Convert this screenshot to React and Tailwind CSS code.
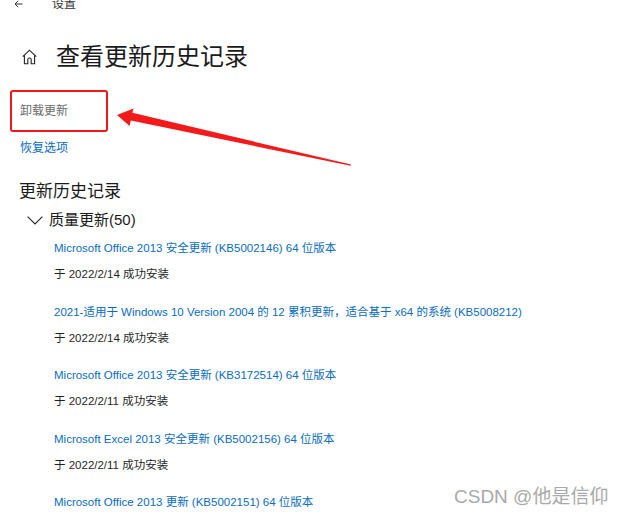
import React from 'react';

const font = '"Liberation Sans", "Noto Sans CJK SC", sans-serif';

const updates = [
  { title: 'Microsoft Office 2013 安全更新 (KB5002146) 64 位版本', date: '于 2022/2/14 成功安装' },
  { title: '2021-适用于 Windows 10 Version 2004 的 12 累积更新，适合基于 x64 的系统 (KB5008212)', date: '于 2022/2/14 成功安装' },
  { title: 'Microsoft Office 2013 安全更新 (KB3172514) 64 位版本', date: '于 2022/2/11 成功安装' },
  { title: 'Microsoft Excel 2013 安全更新 (KB5002156) 64 位版本', date: '于 2022/2/11 成功安装' },
  { title: 'Microsoft Office 2013 更新 (KB5002151) 64 位版本', date: '' },
];

function HomeIcon() {
  return (
    <svg width="15" height="16" viewBox="0 0 15 16" fill="none" stroke="#222" strokeWidth="1.1">
      <path d="M0.8 7.6 L7.5 1.2 L14.2 7.6" />
      <path d="M2.4 6.2 V14.8 H5.8 V10.4 Q5.8 9 7.5 9 Q9.2 9 9.2 10.4 V14.8 H12.6 V6.2" />
    </svg>
  );
}

export default function App() {
  return (
    <div
      className="relative w-[620px] h-[518px] overflow-hidden bg-white text-[#1f1f1f]"
      style={{ fontFamily: font }}
    >
      {/* top bar, cut by the screenshot */}
      <div className="-mt-[4px] h-[16px] flex items-center">
        <svg className="ml-[14px]" width="9" height="8" viewBox="0 0 9 8" fill="none" stroke="#333" strokeWidth="1">
          <path d="M8.5 4 H1 M4.2 0.8 L1 4 L4.2 7.2" />
        </svg>
        <span className="ml-[29px] text-[12px] leading-[16px] text-[#333]">设置</span>
      </div>

      {/* page title */}
      <div className="mt-[29px] h-[32px] flex items-center pl-[22px]">
        <HomeIcon />
        <h1 className="ml-[19px] text-[24px] leading-[32px] text-[#1a1a1a]">查看更新历史记录</h1>
      </div>

      <div className="mt-[30px] pl-[20px] text-[12px] leading-[16px] text-[#6b6b6b]">卸载更新</div>
      <div className="mt-[21px] pl-[20px] text-[12px] leading-[16px] text-[#0a6cc4]">恢复选项</div>

      <h2 className="mt-[24px] pl-[19px] text-[17px] leading-[24px] text-[#1a1a1a]">更新历史记录</h2>

      <div className="mt-[5px] h-[22px] flex items-center pl-[27px]">
        <svg width="16" height="9" viewBox="0 0 16 9" fill="none" stroke="#222" strokeWidth="1.1">
          <path d="M0.6 0.6 L8 8 L15.4 0.6" />
        </svg>
        <span className="ml-[6px] text-[15px] leading-[22px] text-[#1a1a1a]">质量更新(50)</span>
      </div>

      <div className="mt-[7px] pl-[54px] flex flex-col gap-[17.5px]">
        {updates.map((u, i) => (
          <div key={i}>
            <div className="text-[11.5px] leading-[20px] text-[#0a6cc4] whitespace-nowrap">{u.title}</div>
            {u.date && (
              <div className="mt-[6px] text-[11.5px] leading-[20px] text-[#1f1f1f]">{u.date}</div>
            )}
          </div>
        ))}
      </div>

      {/* annotation: red box + arrow */}
      <div className="absolute left-[10px] top-[90px] w-[98px] h-[42px] border-2 border-[#f01818] rounded-[3px]" />
      <svg className="absolute left-0 top-0" width="620" height="518" viewBox="0 0 620 518">
        <polygon
          points="117,115 133.5,108.5 132.3,112.8 351,164.6 350.6,165.8 130.8,120.6 129.6,126"
          fill="#f21a1a"
        />
      </svg>

      {/* watermark */}
      <div className="absolute left-[454px] top-[484px] text-[19px] leading-[26px] text-[#a9a9a9] whitespace-nowrap">
        CSDN @他是信仰
      </div>
    </div>
  );
}
